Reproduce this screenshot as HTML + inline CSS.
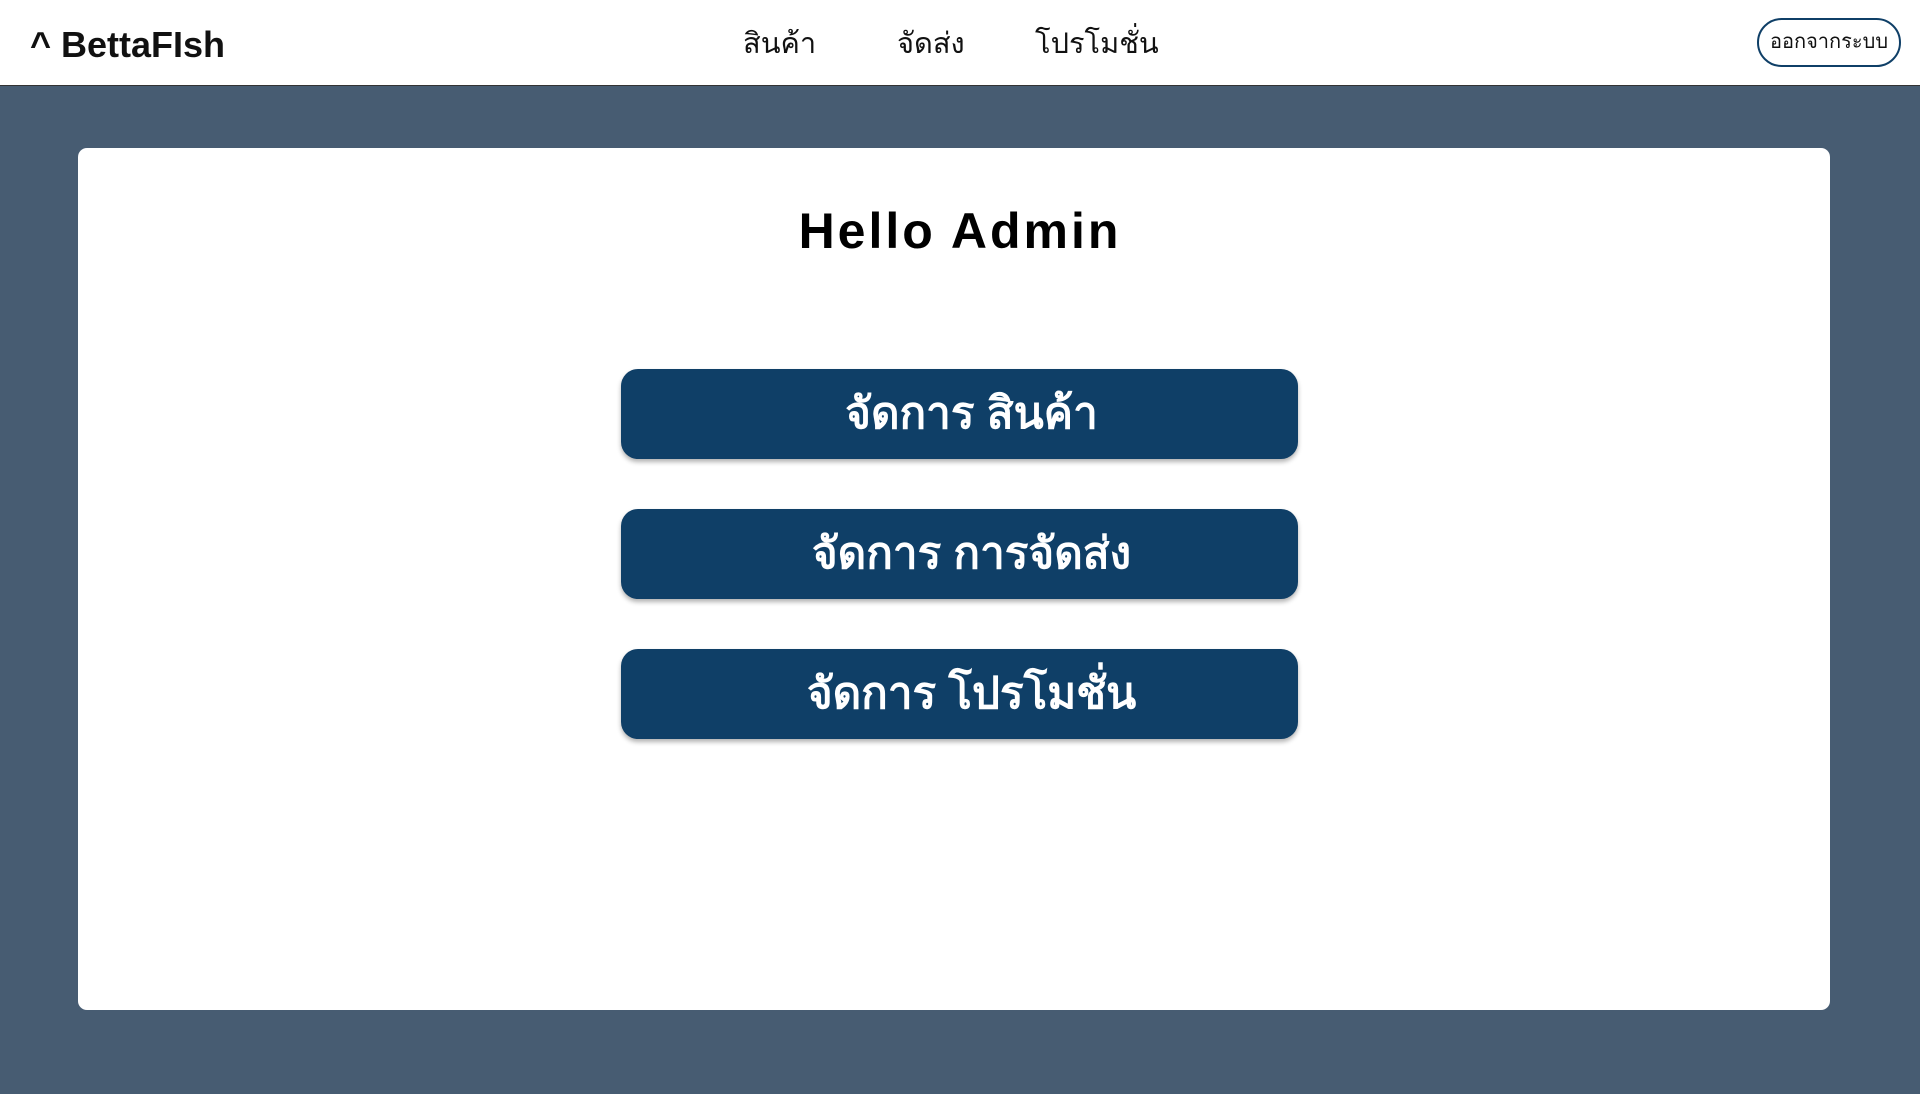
<!DOCTYPE html>
<html><head><meta charset="utf-8"><style>
*{margin:0;padding:0;box-sizing:border-box}
body{width:1920px;height:1094px;background:#475c72;font-family:"Liberation Sans","DejaVu Sans",sans-serif;position:relative;overflow:hidden}
.hdr{position:absolute;left:0;top:0;width:1920px;height:86px;background:#fff;border-bottom:1px solid #333}
.logo{position:absolute;left:30px;top:24px;font-size:36px;font-weight:bold;color:#111}
.nav{position:absolute;top:20px;font-size:29px;color:#111}
.out{position:absolute;left:1757px;top:18px;width:144px;height:49px;border:2px solid #0f3f67;border-radius:25px;font-size:20px;text-align:center;line-height:45px;color:#111}
.card{position:absolute;left:78px;top:148px;width:1752px;height:862px;background:#fff;border-radius:9px}
h1{position:absolute;left:0;width:1920px;top:202px;text-align:center;font-size:50px;letter-spacing:3px;color:#000}
.btn{position:absolute;left:621px;width:677px;height:90px;background:#0f3f67;border-radius:17px;color:#fff;font-size:44px;font-weight:bold;text-align:center;line-height:90px;padding-left:24px;box-shadow:0 3px 5px rgba(0,0,0,.3)}
</style></head><body>
<div class="hdr">
<div class="logo">^ BettaFIsh</div>
<div class="nav" style="left:743px">สินค้า</div>
<div class="nav" style="left:897px">จัดส่ง</div>
<div class="nav" style="left:1035px">โปรโมชั่น</div>
<div class="out">ออกจากระบบ</div>
</div>
<div class="card"></div>
<h1>Hello Admin</h1>
<div class="btn" style="top:369px">จัดการ สินค้า</div>
<div class="btn" style="top:509px">จัดการ การจัดส่ง</div>
<div class="btn" style="top:649px">จัดการ โปรโมชั่น</div>
</body></html>
